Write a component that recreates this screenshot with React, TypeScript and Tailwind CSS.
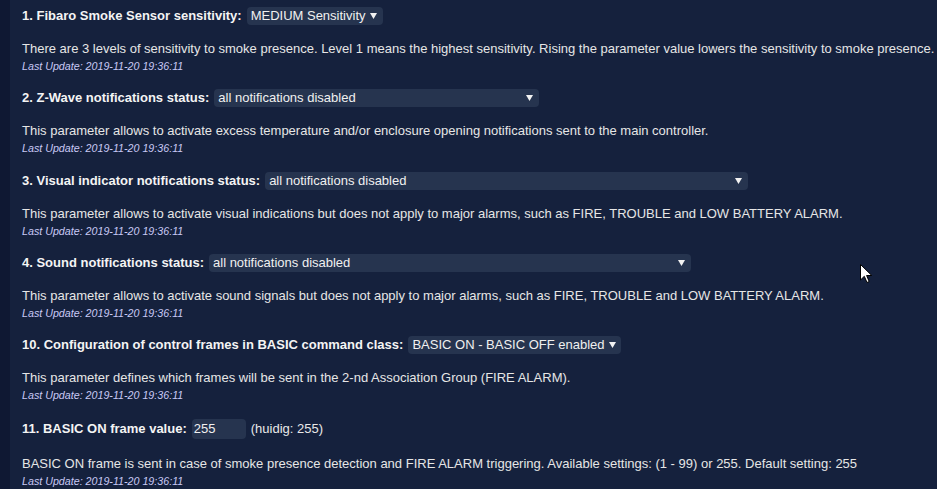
import React from 'react';

type Param = {
  label: string;
  value: string;
  width: number;
  description: string;
  kind?: 'select' | 'input';
  current?: string;
  gap: number;
};

const params: Param[] = [
  {
    label: '1. Fibaro Smoke Sensor sensitivity:',
    value: 'MEDIUM Sensitivity',
    width: 136,
    description:
      'There are 3 levels of sensitivity to smoke presence. Level 1 means the highest sensitivity. Rising the parameter value lowers the sensitivity to smoke presence.',
    gap: 0,
  },
  {
    label: '2. Z-Wave notifications status:',
    value: 'all notifications disabled',
    width: 325,
    description:
      'This parameter allows to activate excess temperature and/or enclosure opening notifications sent to the main controller.',
    gap: 16,
  },
  {
    label: '3. Visual indicator notifications status:',
    value: 'all notifications disabled',
    width: 483,
    description:
      'This parameter allows to activate visual indications but does not apply to major alarms, such as FIRE, TROUBLE and LOW BATTERY ALARM.',
    gap: 17,
  },
  {
    label: '4. Sound notifications status:',
    value: 'all notifications disabled',
    width: 482,
    description:
      'This parameter allows to activate sound signals but does not apply to major alarms, such as FIRE, TROUBLE and LOW BATTERY ALARM.',
    gap: 16,
  },
  {
    label: '10. Configuration of control frames in BASIC command class:',
    value: 'BASIC ON - BASIC OFF enabled',
    width: 213,
    description: 'This parameter defines which frames will be sent in the 2-nd Association Group (FIRE ALARM).',
    gap: 16,
  },
  {
    label: '11. BASIC ON frame value:',
    value: '255',
    width: 54,
    kind: 'input',
    current: '(huidig: 255)',
    description:
      'BASIC ON frame is sent in case of smoke presence detection and FIRE ALARM triggering. Available settings: (1 - 99) or 255. Default setting: 255',
    gap: 17,
  },
];

const FakeSelect: React.FC<{ value: string; width: number }> = ({ value, width }) => (
  <div
    className="flex items-center justify-between h-[18px] rounded-[4px] bg-[#26344f] pl-[4px] pr-[6px] text-[13px] text-[#f0f0f0]"
    style={{ width }}
  >
    <span className="leading-[18px] whitespace-nowrap">{value}</span>
    <svg width="7" height="6" viewBox="0 0 7 6" className="ml-[4px] shrink-0">
      <polygon points="0,0 7,0 3.5,6" fill="#f2f2f2" />
    </svg>
  </div>
);

const ParamBlock: React.FC<{ p: Param }> = ({ p }) => (
  <div style={{ marginTop: p.gap }}>
    <div className={`flex items-center gap-[5px] ${p.kind === 'input' ? 'h-[20px]' : 'h-[18px]'}`}>
      <span className="font-bold text-[13px] text-[#f4f4f4] whitespace-nowrap">{p.label}</span>
      {p.kind === 'input' ? (
        <>
          <div
            className="h-[20px] rounded-[4px] bg-[#26344f] pl-[2px] text-[13px] leading-[20px] text-[#f0f0f0]"
            style={{ width: p.width }}
          >
            {p.value}
          </div>
          <span className="text-[13px] text-[#e8e8e8]">{p.current}</span>
        </>
      ) : (
        <FakeSelect value={p.value} width={p.width} />
      )}
    </div>
    <div className={`${p.kind === 'input' ? 'mt-[17px]' : 'mt-[16px]'} h-[16px] text-[13px] leading-[16px] text-[#e6e6e6] whitespace-nowrap`}>
      {p.description}
    </div>
    <div className="mt-[2px] h-[14px] text-[10.7px] italic leading-[14px] text-[#c9c9f5]">
      Last Update: 2019-11-20 19:36:11
    </div>
  </div>
);

export default function App() {
  return (
    <div
      className="relative flex h-[489px] w-[937px] overflow-hidden bg-[#15213d]"
      style={{ fontFamily: '"Liberation Sans", Arial, sans-serif' }}
    >
      <div className="w-[10px] shrink-0 bg-[#0f1833]" />
      <div className="pl-[12px] pt-[7px]">
        {params.map((p) => (
          <ParamBlock key={p.label} p={p} />
        ))}
      </div>
      <svg
        className="absolute left-[860px] top-[264px]"
        width="13"
        height="20"
        viewBox="0 0 13 20"
      >
        <path d="M0.5 0.5 L0.5 16 L4.3 12.3 L7 18.5 L9.2 17.5 L6.6 11.5 L11.8 11.5 Z" fill="#ffffff" stroke="#000000" strokeWidth="1" />
      </svg>
    </div>
  );
}
